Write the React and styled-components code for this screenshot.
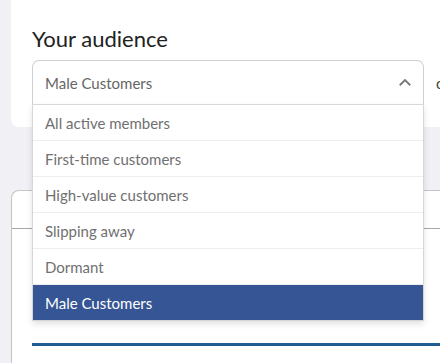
import React from "react";
import styled, { createGlobalStyle } from "styled-components";

const GlobalStyle = createGlobalStyle`
  html, body {
    margin: 0;
    padding: 0;
    background: #f0f0f5;
    font-family: Lato, "Open Sans", sans-serif;
    overflow: hidden;
  }
`;

const Page = styled.div`
  width: 440px;
  height: 363px;
  overflow: hidden;
  display: flex;
  flex-direction: column;
`;

// top panel
const AudienceCard = styled.div`
  margin-left: 11px;
  height: 127px;
  background: #ffffff;
  border-bottom-left-radius: 8px;
  padding: 24px 0 0 21px;
  box-sizing: border-box;
`;

const Title = styled.h2`
  margin: 0;
  font-size: 22px;
  line-height: 30px;
  font-weight: 400;
  color: #222222;
`;

const SelectRow = styled.div`
  display: flex;
  align-items: center;
  gap: 12px;
  margin-top: 6px;
  white-space: nowrap;
`;

const SelectWrap = styled.div`
  position: relative;
  width: 392px;
  flex-shrink: 0;
`;

const SelectBox = styled.div`
  height: 45px;
  box-sizing: border-box;
  border: 1px solid #cfcfcf;
  border-bottom: none;
  border-radius: 7px 7px 0 0;
  display: flex;
  align-items: center;
  justify-content: space-between;
  padding: 0 9px 0 12px;
  font-size: 15px;
  color: #666666;
  background: #fff;
`;

const Chevron = styled.svg`
  width: 18px;
  height: 18px;
  stroke: #777;
  fill: none;
  stroke-width: 2.4;
`;

const SideText = styled.span`
  font-size: 15px;
  color: #444;
`;

// open menu lies over the page
const Menu = styled.ul`
  position: absolute;
  top: 44px;
  left: 0;
  width: 392px;
  box-sizing: border-box;
  margin: 0;
  padding: 0;
  list-style: none;
  background: #fff;
  border: 1px solid #d6d6d6;
  border-top: 1px solid #d8d8d8;
  box-shadow: 0 3px 6px rgba(0, 0, 0, 0.12);
  z-index: 5;
`;

const Option = styled.li`
  height: ${p => (p.first ? "35px" : "36px")};
  box-sizing: border-box;
  display: flex;
  align-items: center;
  padding-left: 12px;
  font-size: 15px;
  color: ${p => (p.selected ? "#ffffff" : "#707070")};
  background: ${p => (p.selected ? "#365594" : "#ffffff")};
  border-top: ${p => (p.first ? "none" : "1px solid #eeeeee")};
`;

// lower panel
const ListCard = styled.div`
  margin: 63px 0 0 11px;
  flex: 1;
  background: #ffffff;
  border: 1px solid #c4c4c4;
  border-right: none;
  border-bottom: none;
  border-top-left-radius: 8px;
`;

const ListHeader = styled.div`
  height: 37px;
  border-bottom: 1px solid #a8a8a8;
`;

const ListBody = styled.div`
  padding: 114px 0 0 20px;
`;

const TabLine = styled.div`
  height: 3px;
  background: #1e5c92;
`;

const options = [
  "All active members",
  "First-time customers",
  "High-value customers",
  "Slipping away",
  "Dormant",
  "Male Customers",
];

export default function App() {
  const current = "Male Customers";
  return (
    <Page>
      <GlobalStyle />
      <AudienceCard>
        <Title>Your audience</Title>
        <SelectRow>
          <SelectWrap>
            <SelectBox>
              <span>{current}</span>
              <Chevron viewBox="0 0 24 24">
                <path d="M5 15l7-7 7 7" />
              </Chevron>
            </SelectBox>
            <Menu>
              {options.map((o, i) => (
                <Option key={o} first={i === 0} selected={o === current}>
                  {o}
                </Option>
              ))}
            </Menu>
          </SelectWrap>
          <SideText>or create new</SideText>
        </SelectRow>
      </AudienceCard>
      <ListCard>
        <ListHeader />
        <ListBody>
          <TabLine />
        </ListBody>
      </ListCard>
    </Page>
  );
}
